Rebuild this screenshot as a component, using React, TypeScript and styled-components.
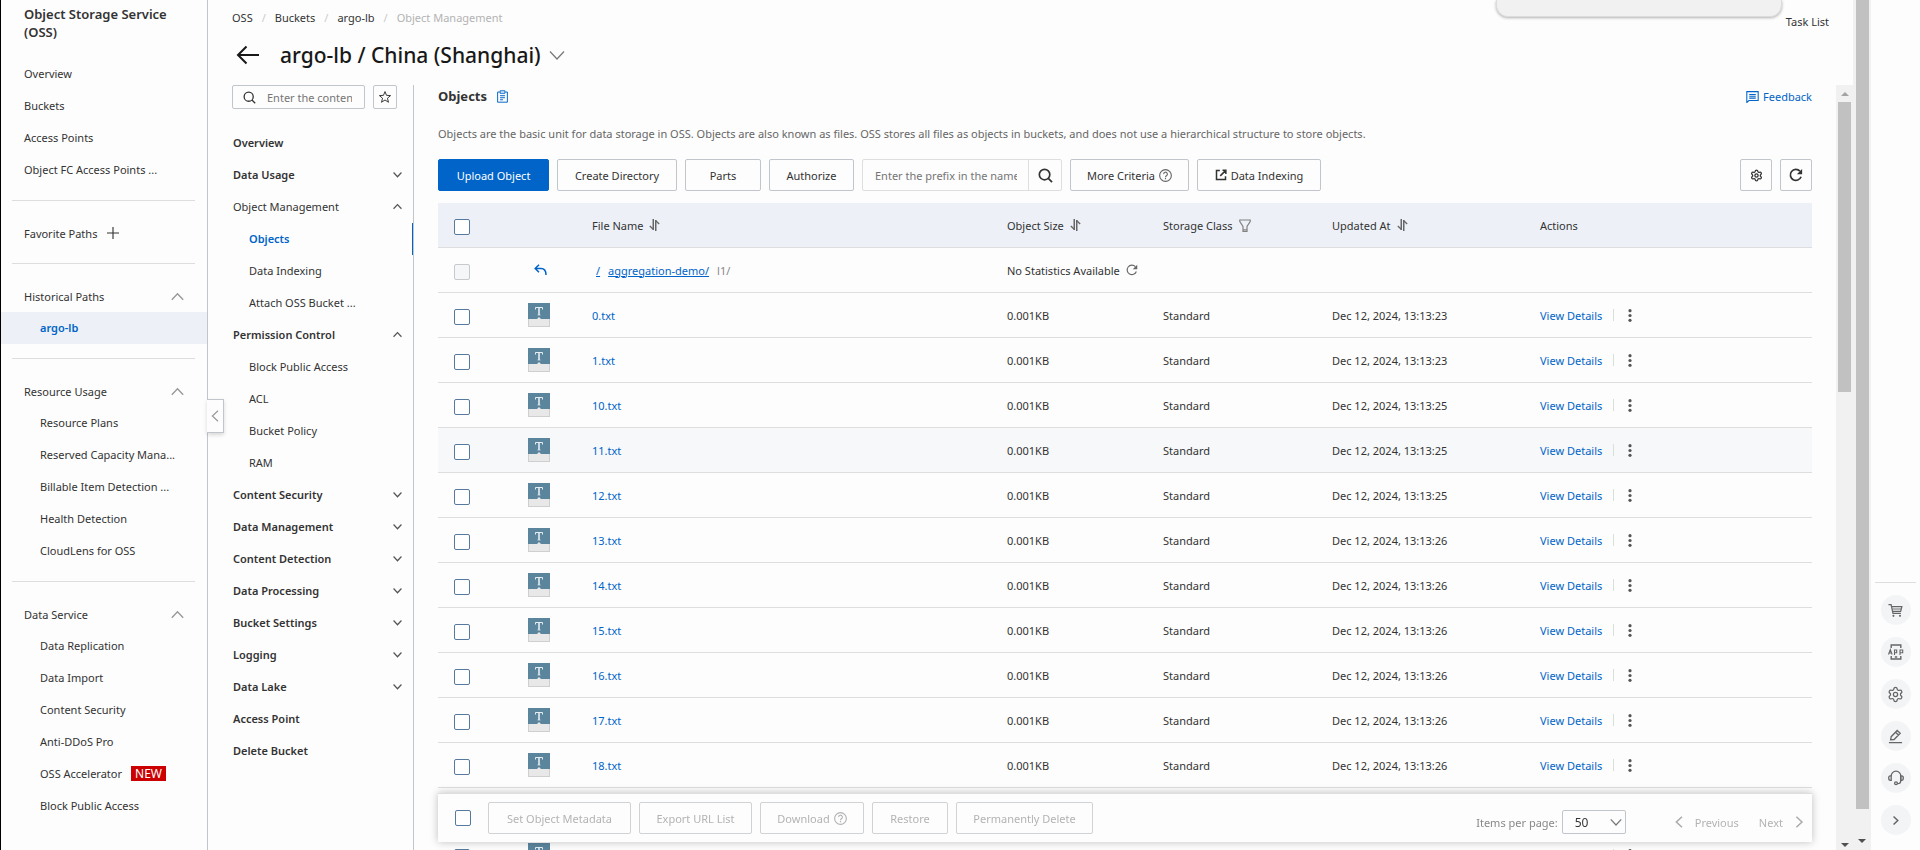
import React from "react";
import styled, { createGlobalStyle, css } from "styled-components";
import { Settings } from "lucide-react";

const c = {
  bg: "#fdfdfd",
  text: "#333333",
  muted: "#666666",
  disabled: "#b3b3b3",
  blue: "#0064c8",
  line: "#dedede",
  border: "#c0c6cc",
  band: "#edf1f7",
  icon: "#555555",
};

const GlobalStyle = createGlobalStyle`
  *, *::before, *::after { box-sizing: border-box; }
  body { margin: 0; background: ${c.bg}; }
  body, button, input, select {
    font-family: "Noto Sans", "Open Sans", sans-serif;
    font-size: 11px;
    color: ${c.text};
  }
  svg { display: block; flex: none; }
`;

/* ---------- icons ---------- */

type IconProps = { size?: number; color?: string; width?: number };

const Svg = ({
  size = 16,
  color = "currentColor",
  width = 1.4,
  children,
}: IconProps & { children: React.ReactNode }) => (
  <svg
    width={size}
    height={size}
    viewBox="0 0 16 16"
    fill="none"
    stroke={color}
    strokeWidth={width}
    aria-hidden="true"
  >
    {children}
  </svg>
);

const Chevron = ({
  dir,
  size = 16,
  color = c.icon,
  width = 1.2,
}: IconProps & { dir: "up" | "down" | "left" | "right" }) => {
  const d = {
    up: "M1 12 8 4.5 15 12",
    down: "M1 4.5 8 12 15 4.5",
    left: "M12 1 4.5 8 12 15",
    right: "M4.5 1 12 8 4.5 15",
  }[dir];
  return (
    <Svg size={size} color={color} width={(width * 16) / size}>
      <path d={d} />
    </Svg>
  );
};

const SearchIcon = ({ size = 14, color = c.text, width = 1.6 }: IconProps) => (
  <Svg size={size} color={color} width={width}>
    <circle cx="7" cy="7" r="5.6" />
    <path d="M11 11l4 4" />
  </Svg>
);

const StarIcon = () => (
  <Svg size={14} color={c.text} width={1.1}>
    <path d="M8 1.8l1.7 4.3 4.7.3-3.6 3 1.2 4.6-4-2.6-4 2.6 1.2-4.6-3.6-3 4.7-.3z" />
  </Svg>
);

const PlusIcon = () => (
  <Svg size={12} color={c.text} width={1.5}>
    <path d="M8 0v16M0 8h16" />
  </Svg>
);

const BackIcon = () => (
  <svg width="24" height="20" viewBox="0 0 24 20" fill="none" stroke="#181818" strokeWidth="2" aria-hidden="true">
    <path d="M23 10H2.5M10.5 1.5 2 10l8.500 8.500" />
  </svg>
);

const ClipboardIcon = () => (
  <Svg size={13} color={c.blue} width={1.2}>
    <path d="M4.5 2.5H2v12.5h12V2.500h-2.500" />
    <path d="M5 1h6v3H5zM5 7h6M5 9.5h6M5 12h3.5" />
  </Svg>
);

const FeedbackIcon = () => (
  <Svg size={13} color={c.blue} width={1.3}>
    <path d="M1 15.400V2h14v11H3.700z" />
    <path d="M4 5.500h8M4 7.700h8M4 10h8" />
  </Svg>
);

const HelpIcon = ({ color = c.muted }: IconProps) => (
  <Svg size={13} color={color} width={1.4}>
    <circle cx="8" cy="8" r="7.200" />
    <path d="M5.700 6.300a2.300 2.300 0 1 1 3.500 1.900C8.300 8.700 8 9 8 10M8 11v1.500" />
  </Svg>
);

const ExternalIcon = () => (
  <Svg size={12} color={c.text} width={2}>
    <path d="M6.500 2H2v12h12V9.500M10 1.800h4.500v4.700M14 2.200 7 9.200" />
  </Svg>
);

const RefreshIcon = ({ size = 14, color = c.text, width = 1.9 }: IconProps) => (
  <Svg size={size} color={color} width={width}>
    <path d="M13.800 10A6.300 6.300 0 1 1 12.500 3.600" />
    <path d="M15 1v6H9z" fill={color} stroke="none" />
  </Svg>
);

const SortIcon = () => (
  <svg width="11" height="12" viewBox="0 0 11 12" fill="none" stroke="#666666" aria-hidden="true">
    <path d="M4.250 0v11M6.750 12V1" strokeWidth="1.500" />
    <path d="M4.500 10.500 .8 7M6.500 1.500 10.200 5" strokeWidth="1.300" />
  </svg>
);

const FilterIcon = () => (
  <svg width="12" height="13" viewBox="0 0 12 13" fill="none" stroke="#808080" strokeWidth="1.200" aria-hidden="true">
    <path d="M.8 1h10.400v1.500L8 7.500v5H4v-5L.8 2.500zM4 10.800h4" />
  </svg>
);

const ReplyIcon = () => (
  <svg width="13" height="12" viewBox="0 0 13 12" fill="none" stroke={c.blue} strokeWidth="1.500" aria-hidden="true">
    <path d="M5 .8 1.200 4.500 5 8.200M1.500 4.500H7c3 0 5 2 5 6.500" />
  </svg>
);

const MoreIcon = () => (
  <svg width="4" height="13" viewBox="0 0 4 13" fill={c.icon} aria-hidden="true">
    <circle cx="2" cy="1.700" r="1.600" />
    <circle cx="2" cy="6.500" r="1.600" />
    <circle cx="2" cy="11.300" r="1.600" />
  </svg>
);

const TextFileIcon = () => (
  <svg width="22" height="24" viewBox="0 0 22 24" aria-hidden="true">
    <rect x=".5" y=".5" width="21" height="23" fill="#e8e8e8" stroke="#cfcfcf" />
    <rect width="22" height="16" fill="#5b859d" />
    <path d="M7.500 6.500V4.500h7v2" fill="none" stroke="#e6eef2" />
    <path d="M11 4.500v7.500" fill="none" stroke="#e6eef2" strokeWidth="1.600" />
    <path d="M9.500 12h3" fill="none" stroke="#e6eef2" strokeWidth=".7" />
    <path d="M9 16l2-2 2 2z" fill="#e8e8e8" />
  </svg>
);

const CartIcon = () => (
  <Svg size={15} color={c.muted} width={1.3}>
    <path d="M.5 1.800h2.800l2 9.200h8.400M3.800 3.800h11L13.500 9H5" />
    <path d="M4.500 6.400h9.500" strokeWidth="1" />
    <circle cx="5.800" cy="13.700" r="1.100" fill={c.muted} stroke="none" />
    <circle cx="12.800" cy="13.700" r="1.100" fill={c.muted} stroke="none" />
  </Svg>
);

const AppIcon = () => (
  <Svg size={16} color={c.muted} width={1.4}>
    <path d="M3.200 4V1h9.600v3M3.200 12v3h9.600v-3M6.800 13h2.400" />
    <path d="M.5 10.500 2.300 5.500l1.800 5M1.200 9h2.300M6.500 11V6h2.200v2.700H6.500M12 11V6h2.700v2.700H12" strokeWidth="1.100" />
  </Svg>
);

const PencilIcon = () => (
  <Svg size={15} color={c.muted} width={1.4}>
    <path d="M2.800 11.500l.6-3.300L9.800 1.600l3.200 3-6.500 6.600zM8 3.500l3.200 3M1 14.500h14" />
  </Svg>
);

const HeadsetIcon = () => (
  <Svg size={16} color={c.muted} width={1.3}>
    <path d="M3.200 6a4.800 4.800 0 0 1 9.600 0v4.500c0 2-1.500 3.200-3.300 3.200" />
    <path d="M3.200 5.800H2.300C1.300 5.800.7 6.500.7 8s.6 2.300 1.600 2.300h.9zM12.800 5.800h.9c1 0 1.600.7 1.600 2.200s-.6 2.300-1.600 2.300h-.9z" />
    <circle cx="8" cy="13.200" r="1.400" />
  </Svg>
);

/* ---------- shell ---------- */

const Shell = styled.div`
  display: flex;
  height: 100vh;
  overflow: hidden;
  border-left: 1px solid #000;
  background: ${c.bg};
`;

const Sidebar = styled.nav`
  position: relative;
  flex: none;
  width: 207px;
  padding-top: 5px;
  border-right: 1px solid ${c.border};
`;

const ProductName = styled.h2`
  margin: 0 23px 17px;
  font-size: 13px;
  line-height: 18px;
  font-weight: 600;
`;

const Section = styled.section`
  padding-bottom: 14px;
  &:not(:first-of-type)::before {
    content: "";
    display: block;
    height: 1px;
    margin: 0 12px 16px 11px;
    background: ${c.line};
  }
`;

const SideLink = styled.a<{ $sub?: boolean; $active?: boolean }>`
  display: flex;
  align-items: center;
  gap: 9px;
  height: 32px;
  padding: 0 23px 2px ${(p) => (p.$sub ? 39 : 23)}px;
  color: ${c.text};
  text-decoration: none;
  white-space: nowrap;
  ${(p) =>
    p.$active &&
    css`
      background: ${c.band};
      color: ${c.blue};
      font-weight: 600;
    `}
`;

const SideToggle = styled.button<{ $spread?: boolean }>`
  display: flex;
  align-items: center;
  justify-content: ${(p) => (p.$spread ? "space-between" : "flex-start")};
  gap: 10px;
  width: 100%;
  height: 32px;
  padding: 0 23px;
  border: 0;
  background: none;
`;

const NewBadge = styled.span`
  padding: 0 4px;
  background: #cc0000;
  color: #fff;
  font-size: 12px;
  line-height: 15px;
`;

const CollapseHandle = styled.button`
  position: absolute;
  z-index: 1;
  top: calc(50% - 26px);
  left: 100%;
  display: grid;
  place-items: center;
  width: 17px;
  height: 34px;
  padding: 0;
  border: 1px solid ${c.border};
  border-left: 0;
  background: ${c.bg};
  box-shadow: 0 2px 4px rgba(0, 0, 0, 0.15);
`;

const Main = styled.main`
  flex: 1;
  min-width: 0;
  display: flex;
  flex-direction: column;
`;

const Header = styled.header`
  position: relative;
  flex: none;
  display: flex;
  justify-content: space-between;
  height: 85px;
  padding: 0 24px;
`;

const Crumbs = styled.ol`
  display: flex;
  gap: 9px;
  margin: 0;
  padding: 0;
  list-style: none;
  line-height: 36px;
`;

const Crumb = styled.li<{ $current?: boolean }>`
  display: flex;
  gap: 9px;
  color: ${(p) => (p.$current ? c.disabled : c.text)};
  &:not(:first-child)::before {
    content: "/";
    color: #cccccc;
  }
  a {
    color: inherit;
    text-decoration: none;
  }
`;

const TitleRow = styled.div`
  display: flex;
  align-items: center;
  height: 38px;
  padding-left: 4px;
`;

const PlainButton = styled.button`
  display: inline-flex;
  align-items: center;
  padding: 0;
  border: 0;
  background: none;
`;

const Title = styled.h1`
  margin: 0 8px 0 20px;
  color: #181818;
  font-size: 21px;
  line-height: 32px;
  font-weight: 500;
`;

const TaskList = styled.a`
  color: ${c.text};
  line-height: 44px;
  text-decoration: none;
`;

const Toast = styled.div`
  position: absolute;
  top: 0;
  right: 71px;
  width: 286px;
  height: 17px;
  border: 1px solid #dcdcdc;
  border-top: 0;
  border-radius: 0 0 12px 12px;
  background: #f1f1f1;
  box-shadow: 0 1px 3px rgba(0, 0, 0, 0.3);
`;

const Body = styled.div`
  flex: 1;
  min-height: 0;
  display: flex;
`;

/* ---------- bucket navigation ---------- */

const BucketNav = styled.nav`
  flex: none;
  width: 206px;
  padding-left: 24px;
  border-right: 1px solid ${c.border};
`;

const NavTools = styled.div`
  display: flex;
  gap: 8px;
  margin-bottom: 18px;
`;

const NavSearch = styled.label`
  display: flex;
  align-items: center;
  gap: 11px;
  width: 133px;
  height: 24px;
  padding: 0 12px 0 10px;
  border: 1px solid ${c.border};
  border-radius: 2px;
`;

const BareInput = styled.input`
  flex: 1;
  min-width: 0;
  padding: 0;
  border: 0;
  outline: 0;
  background: none;
  &::placeholder {
    color: #757575;
  }
`;

const StarButton = styled.button`
  display: grid;
  place-items: center;
  width: 24px;
  height: 24px;
  padding: 0;
  border: 1px solid ${c.border};
  border-radius: 2px;
  background: none;
`;

const NavItem = styled.a<{ $kind: "group" | "open" | "child" | "active" }>`
  display: flex;
  align-items: center;
  justify-content: space-between;
  height: 32px;
  padding: 0 11px 2px ${(p) => (p.$kind === "group" || p.$kind === "open" ? 1 : 17)}px;
  color: ${c.text};
  font-weight: ${(p) => (p.$kind === "group" || p.$kind === "active" ? 600 : 400)};
  text-decoration: none;
  white-space: nowrap;
  ${(p) =>
    p.$kind === "active" &&
    css`
      color: ${c.blue};
      border-right: 1px solid ${c.blue};
    `}
`;

/* ---------- content ---------- */

const Content = styled.section`
  flex: 1;
  min-width: 0;
  padding: 0 24px;
  overflow: hidden;
`;

const ContentHead = styled.div`
  display: flex;
  align-items: center;
  justify-content: space-between;
  height: 22px;
`;

const ContentTitle = styled.h3`
  display: flex;
  align-items: center;
  gap: 9px;
  margin: 0;
  font-size: 13px;
  font-weight: 700;
`;

const IconLink = styled.a`
  display: inline-flex;
  align-items: center;
  gap: 4px;
  color: ${c.blue};
  text-decoration: none;
`;

const Description = styled.p`
  margin: 17px 0 15px;
  color: ${c.muted};
  line-height: 20px;
`;

const Bar = styled.div`
  display: flex;
  align-items: center;
  gap: 8px;
`;

const Toolbar = styled(Bar)`
  margin-bottom: 12px;
`;

const Spacer = styled.span`
  flex: 1;
`;

const Button = styled.button<{ $width: number; $primary?: boolean }>`
  display: inline-flex;
  align-items: center;
  justify-content: center;
  gap: 4px;
  width: ${(p) => p.$width}px;
  height: 32px;
  padding: 0;
  border: 1px solid ${(p) => (p.$primary ? c.blue : c.border)};
  border-radius: 2px;
  background: ${(p) => (p.$primary ? c.blue : "transparent")};
  color: ${(p) => (p.$primary ? "#fff" : c.text)};
  white-space: nowrap;
  &:disabled {
    border-color: #d0d3d6;
    color: ${c.disabled};
  }
`;

const PrefixSearch = styled.div`
  display: flex;
  width: 200px;
  height: 32px;
  padding-left: 12px;
  border: 1px solid ${c.line};
  border-radius: 2px;
`;

const SearchButton = styled.button`
  display: grid;
  place-items: center;
  width: 33px;
  margin-left: 11px;
  padding: 0;
  border: 0;
  border-left: 1px solid ${c.line};
  background: none;
`;

const Table = styled.table`
  width: 100%;
  table-layout: fixed;
  border-collapse: separate;
  border-spacing: 0;
`;

const HeadCell = styled.th<{ $width?: number }>`
  width: ${(p) => (p.$width ? `${p.$width}px` : "auto")};
  height: 45px;
  padding: 0 16px;
  border-bottom: 1px solid ${c.line};
  background: ${c.band};
  font-weight: 400;
  text-align: left;
`;

const Row = styled.tr<{ $hover?: boolean }>`
  background: ${(p) => (p.$hover ? "#f6f8fa" : "transparent")};
`;

const Cell = styled.td`
  height: 45px;
  padding: 0 16px;
  border-bottom: 1px solid ${c.line};
`;

const Inline = styled.span<{ $gap?: number }>`
  display: flex;
  align-items: center;
  gap: ${(p) => p.$gap ?? 6}px;
`;

const Check = styled.input.attrs({ type: "checkbox" })`
  display: block;
  appearance: none;
  width: 16px;
  height: 16px;
  margin: 3px 0 0;
  border: 1px solid #57799d;
  border-radius: 2px;
  background: #fff;
  &:disabled {
    border-color: #c6cacd;
    background: #f4f6f7;
  }
`;

const Link = styled.a<{ $underline?: boolean }>`
  color: ${c.blue};
  text-decoration: ${(p) => (p.$underline ? "underline" : "none")};
`;

const PathLine = styled.span`
  display: flex;
  gap: 8px;
  padding-left: 4px;
`;

const PathTail = styled.span`
  color: #888888;
`;

const ParentButton = styled(PlainButton)`
  display: flex;
  justify-content: center;
  width: 24px;
`;

const MoreButton = styled(PlainButton)`
  padding-left: 3px;
`;

const Separator = styled.span`
  width: 1px;
  height: 12px;
  background: #d8e0da;
`;

const FooterBar = styled(Bar)`
  position: sticky;
  bottom: 8px;
  height: 49px;
  padding-left: 17px;
  border-top: 1px solid ${c.line};
  background: ${c.bg};
  box-shadow: 0 0 8px rgba(0, 0, 0, 0.25);
`;

const FooterCheck = styled(Check)`
  margin: 0 9px 0 0;
`;

const Pager = styled.div`
  display: flex;
  align-items: center;
  padding: 8px 7px 0 0;
  color: #888888;
`;

const SelectBox = styled.span`
  position: relative;
  margin: 0 47px 0 4px;
  svg {
    position: absolute;
    top: 6px;
    right: 4px;
    pointer-events: none;
  }
`;

const Select = styled.select`
  display: block;
  appearance: none;
  width: 64px;
  height: 24px;
  padding: 0 12px;
  border: 1px solid ${c.border};
  border-radius: 2px;
  background: none;
  font-size: 12px;
`;

const PageButton = styled.button`
  display: inline-flex;
  align-items: center;
  gap: 10px;
  margin-right: 20px;
  padding: 0;
  border: 0;
  background: none;
  &:last-child {
    margin-right: 0;
  }
  &:disabled {
    color: ${c.disabled};
  }
`;

/* ---------- scroll rails and right dock ---------- */

const Rail = styled.div<{ $width: number; $gapEnd: number }>`
  flex: none;
  display: flex;
  flex-direction: column;
  align-items: center;
  width: ${(p) => p.$width}px;
  padding-bottom: ${(p) => p.$gapEnd}px;
  background: #f1f1f1;
`;

const RailThumb = styled.div<{ $share: number }>`
  width: 13px;
  height: ${(p) => p.$share}%;
  background: #c1c1c1;
`;

const RailArrow = styled.span<{ $dir: "up" | "down" }>`
  border: 4px solid transparent;
  ${(p) =>
    p.$dir === "up"
      ? css`
          margin: 3px 0 6px;
          border-bottom-color: #a3a3a3;
        `
      : css`
          margin-top: auto;
          border-bottom-width: 0;
          border-top-color: #505050;
        `}
`;

const Dock = styled.aside`
  flex: none;
  display: flex;
  flex-direction: column;
  align-items: center;
  justify-content: flex-end;
  gap: 12px;
  width: 49px;
  padding-bottom: 15px;
`;

const DockLine = styled.span`
  width: 41px;
  height: 1px;
  background: ${c.line};
`;

const DockButton = styled.button`
  display: grid;
  place-items: center;
  width: 30px;
  height: 30px;
  padding: 0;
  border: 0;
  border-radius: 50%;
  background: #f2f4f6;
`;

/* ---------- data ---------- */

const topLinks = ["Overview", "Buckets", "Access Points", "Object FC Access Points ..."];
const usageLinks = [
  "Resource Plans",
  "Reserved Capacity Mana...",
  "Billable Item Detection ...",
  "Health Detection",
  "CloudLens for OSS",
];
const serviceLinks = [
  "Data Replication",
  "Data Import",
  "Content Security",
  "Anti-DDoS Pro",
  "OSS Accelerator",
  "Block Public Access",
];

type NavEntry = [string, "group" | "open" | "child" | "active", ("up" | "down")?];
const bucketNav: NavEntry[] = [
  ["Overview", "group"],
  ["Data Usage", "group", "down"],
  ["Object Management", "open", "up"],
  ["Objects", "active"],
  ["Data Indexing", "child"],
  ["Attach OSS Bucket ...", "child"],
  ["Permission Control", "group", "up"],
  ["Block Public Access", "child"],
  ["ACL", "child"],
  ["Bucket Policy", "child"],
  ["RAM", "child"],
  ["Content Security", "group", "down"],
  ["Data Management", "group", "down"],
  ["Content Detection", "group", "down"],
  ["Data Processing", "group", "down"],
  ["Bucket Settings", "group", "down"],
  ["Logging", "group", "down"],
  ["Data Lake", "group", "down"],
  ["Access Point", "group"],
  ["Delete Bucket", "group"],
];

const files = [
  ["0.txt", "23"],
  ["1.txt", "23"],
  ["10.txt", "25"],
  ["11.txt", "25"],
  ["12.txt", "25"],
  ["13.txt", "26"],
  ["14.txt", "26"],
  ["15.txt", "26"],
  ["16.txt", "26"],
  ["17.txt", "26"],
  ["18.txt", "26"],
  ["19.txt", "26"],
  ["2.txt", "26"],
];

const bulkActions: [string, number][] = [
  ["Set Object Metadata", 143],
  ["Export URL List", 113],
  ["Download", 104],
  ["Restore", 76],
  ["Permanently Delete", 137],
];

const SideGroup = ({ title, children }: { title: string; children: React.ReactNode }) => (
  <Section>
    <SideToggle $spread aria-expanded="true">
      {title}
      <Chevron dir="up" size={13} color="#999999" width={1.4} />
    </SideToggle>
    {children}
  </Section>
);

export default function App() {
  return (
    <Shell>
      <GlobalStyle />
      <Sidebar aria-label="Product">
        <ProductName>Object Storage Service (OSS)</ProductName>
        <Section>
          {topLinks.map((t) => (
            <SideLink key={t} href="#">{t}</SideLink>
          ))}
        </Section>
        <Section>
          <SideToggle>
            Favorite Paths
            <PlusIcon />
          </SideToggle>
        </Section>
        <SideGroup title="Historical Paths">
          <SideLink href="#" $sub $active>argo-lb</SideLink>
        </SideGroup>
        <SideGroup title="Resource Usage">
          {usageLinks.map((t) => (
            <SideLink key={t} href="#" $sub>{t}</SideLink>
          ))}
        </SideGroup>
        <SideGroup title="Data Service">
          {serviceLinks.map((t) => (
            <SideLink key={t} href="#" $sub>
              {t}
              {t === "OSS Accelerator" && <NewBadge>NEW</NewBadge>}
            </SideLink>
          ))}
        </SideGroup>
        <CollapseHandle aria-label="Collapse menu">
          <Chevron dir="left" size={12} color="#999999" />
        </CollapseHandle>
      </Sidebar>

      <Main>
        <Header>
          <div>
            <Crumbs>
              <Crumb><a href="#">OSS</a></Crumb>
              <Crumb><a href="#">Buckets</a></Crumb>
              <Crumb><a href="#">argo-lb</a></Crumb>
              <Crumb $current>Object Management</Crumb>
            </Crumbs>
            <TitleRow>
              <PlainButton aria-label="Back"><BackIcon /></PlainButton>
              <Title>argo-lb / China (Shanghai)</Title>
              <PlainButton aria-label="Switch bucket">
                <Chevron dir="down" size={16} color="#777777" />
              </PlainButton>
            </TitleRow>
          </div>
          <TaskList href="#">Task List</TaskList>
          <Toast role="status" />
        </Header>

        <Body>
          <BucketNav aria-label="Bucket">
            <NavTools>
              <NavSearch>
                <SearchIcon size={13} />
                <BareInput aria-label="Search menu" placeholder="Enter the content" />
              </NavSearch>
              <StarButton aria-label="Favorite"><StarIcon /></StarButton>
            </NavTools>
            {bucketNav.map(([label, kind, dir]) => (
              <NavItem key={label} href="#" $kind={kind}>
                {label}
                {dir && <Chevron dir={dir} size={9} />}
              </NavItem>
            ))}
          </BucketNav>

          <Content>
            <ContentHead>
              <ContentTitle>
                Objects
                <ClipboardIcon />
              </ContentTitle>
              <IconLink href="#">
                <FeedbackIcon />
                Feedback
              </IconLink>
            </ContentHead>
            <Description>
              Objects are the basic unit for data storage in OSS. Objects are also known as files. OSS
              stores all files as objects in buckets, and does not use a hierarchical structure to store
              objects.
            </Description>
            <Toolbar>
              <Button $width={111} $primary>Upload Object</Button>
              <Button $width={120}>Create Directory</Button>
              <Button $width={76}>Parts</Button>
              <Button $width={85}>Authorize</Button>
              <PrefixSearch>
                <BareInput aria-label="Prefix" placeholder="Enter the prefix in the name" />
                <SearchButton aria-label="Search"><SearchIcon size={15} width={1.8} /></SearchButton>
              </PrefixSearch>
              <Button $width={119}>More Criteria <HelpIcon /></Button>
              <Button $width={124}><ExternalIcon /> Data Indexing</Button>
              <Spacer />
              <Button $width={32} aria-label="Columns"><Settings size={13} strokeWidth={2.4} /></Button>
              <Button $width={32} aria-label="Refresh"><RefreshIcon /></Button>
            </Toolbar>

            <Table>
              <thead>
                <tr>
                  <HeadCell $width={74}><Check aria-label="Select all" /></HeadCell>
                  <HeadCell $width={64} aria-label="Type" />
                  <HeadCell><Inline>File Name <SortIcon /></Inline></HeadCell>
                  <HeadCell $width={156}><Inline>Object Size <SortIcon /></Inline></HeadCell>
                  <HeadCell $width={169}><Inline>Storage Class <FilterIcon /></Inline></HeadCell>
                  <HeadCell $width={208}><Inline>Updated At <SortIcon /></Inline></HeadCell>
                  <HeadCell $width={288}>Actions</HeadCell>
                </tr>
              </thead>
              <tbody>
                <Row>
                  <Cell><Check aria-label="Select parent" disabled /></Cell>
                  <Cell><ParentButton aria-label="Parent directory"><ReplyIcon /></ParentButton></Cell>
                  <Cell>
                    <PathLine>
                      <Link href="#" $underline>/</Link>
                      <Link href="#" $underline>aggregation-demo/</Link>
                      <PathTail>l1/</PathTail>
                    </PathLine>
                  </Cell>
                  <Cell colSpan={2}>
                    <Inline>No Statistics Available <RefreshIcon size={12} color={c.muted} width={1.5} /></Inline>
                  </Cell>
                  <Cell />
                  <Cell />
                </Row>
                {files.map(([name, sec]) => (
                  <Row key={name} $hover={name === "11.txt"}>
                    <Cell><Check aria-label={`Select ${name}`} /></Cell>
                    <Cell><TextFileIcon /></Cell>
                    <Cell><Link href="#">{name}</Link></Cell>
                    <Cell>0.001KB</Cell>
                    <Cell>Standard</Cell>
                    <Cell>Dec 12, 2024, 13:13:{sec}</Cell>
                    <Cell>
                      <Inline $gap={11}>
                        <Link href="#">View Details</Link>
                        <Separator />
                        <MoreButton aria-label={`More actions for ${name}`}><MoreIcon /></MoreButton>
                      </Inline>
                    </Cell>
                  </Row>
                ))}
              </tbody>
            </Table>

            <FooterBar>
              <FooterCheck aria-label="Select all on page" />
              {bulkActions.map(([label, width]) => (
                <Button key={label} $width={width} disabled>
                  {label}
                  {label === "Download" && <HelpIcon color={c.disabled} />}
                </Button>
              ))}
              <Spacer />
              <Pager>
                <label htmlFor="page-size">Items per page:</label>
                <SelectBox>
                  <Select id="page-size" defaultValue="50">
                    <option>20</option>
                    <option>50</option>
                    <option>100</option>
                  </Select>
                  <Chevron dir="down" size={12} color="#777777" />
                </SelectBox>
                <PageButton disabled><Chevron dir="left" size={12} color="#aaaaaa" width={1.5} />Previous</PageButton>
                <PageButton disabled>Next<Chevron dir="right" size={12} color="#aaaaaa" width={1.5} /></PageButton>
              </Pager>
            </FooterBar>
          </Content>

          <Rail $width={17} $gapEnd={3} aria-hidden="true">
            <RailArrow $dir="up" />
            <RailThumb $share={38} />
            <RailArrow $dir="down" />
          </Rail>
        </Body>
      </Main>

      <Rail $width={18} $gapEnd={7} aria-hidden="true">
        <RailThumb $share={96} />
        <RailArrow $dir="down" />
      </Rail>

      <Dock aria-label="Shortcuts">
        <DockLine />
        <DockButton aria-label="Cart"><CartIcon /></DockButton>
        <DockButton aria-label="App"><AppIcon /></DockButton>
        <DockButton aria-label="Settings"><Settings size={17} strokeWidth={1.8} color={c.muted} /></DockButton>
        <DockButton aria-label="Edit"><PencilIcon /></DockButton>
        <DockButton aria-label="Support"><HeadsetIcon /></DockButton>
        <DockButton aria-label="Expand"><Chevron dir="right" size={9} color={c.muted} width={1.5} /></DockButton>
      </Dock>
    </Shell>
  );
}
